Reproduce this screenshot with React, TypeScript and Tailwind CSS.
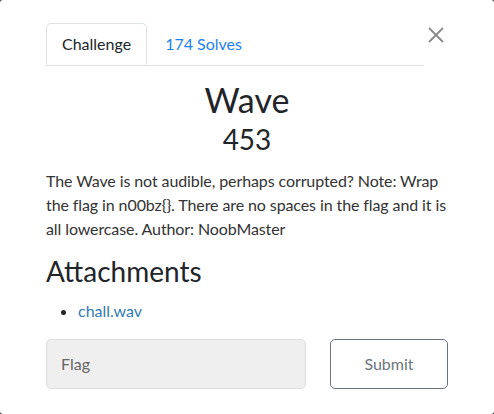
import React from "react";

const App = () => {
  return (
    <div className="w-[494px] h-[414px] bg-[#444]" style={{ fontFamily: "Lato, 'Noto Sans', sans-serif" }}>
      <div className="bg-white h-full rounded-[3px] pt-[23px] px-[46px] text-[#212529]">
        <div className="flex items-start">
          <ul className="flex w-[378px] border-b border-[#dee2e6]">
            <li className="-mb-px h-[42px] flex items-center px-[15px] border border-[#dee2e6] border-b-white rounded-t-[5px] bg-white text-[16px] text-[#212529]">
              Challenge
            </li>
            <li className="h-[42px] flex items-center px-[18px] text-[16px] text-[#1e7ff0]">
              174 Solves
            </li>
          </ul>
          <button type="button" className="ml-auto mr-[4px] mt-[4px] w-[16px] h-[16px]">
            <svg viewBox="0 0 16 16" width="16" height="16">
              <path d="M1 1 L15 15 M15 1 L1 15" stroke="#8a8a8a" strokeWidth="1.8" />
            </svg>
          </button>
        </div>

        <h2 className="mt-[14px] text-center text-[34px] leading-[1.2] text-[#212529]">Wave</h2>
        <h3 className="mt-[2px] text-center text-[28px] leading-[1.2] text-[#212529]">453</h3>

        <p className="mt-[13px] -mr-[6px] text-[16px] leading-[24px] tracking-[-0.1px] text-[#333]">
          The Wave is not audible, perhaps corrupted? Note: Wrap the flag in n00bz{"{}"}. There are no spaces in the flag and it is all lowercase. Author: NoobMaster
        </p>

        <h4 className="mt-[14px] text-[28px] leading-[1.2] text-[#212529]">Attachments</h4>
        <ul className="mt-[10px] list-disc pl-[32px] text-[16px] leading-[24px]">
          <li>
            <a className="text-[#337ab7]">chall.wav</a>
          </li>
        </ul>

        <div className="mt-[16px] flex">
          <input
            type="text"
            placeholder="Flag"
            className="w-[260px] h-[50px] rounded-[5px] border border-[#dcdcdc] bg-[#efefef] px-[14px] text-[16px] placeholder:text-[#666]"
          />
          <button
            type="button"
            className="ml-auto w-[118px] h-[50px] rounded-[5px] border border-[#6c757d] text-[16px] text-[#6c757d]"
          >
            Submit
          </button>
        </div>
      </div>
    </div>
  );
};

export default App;
